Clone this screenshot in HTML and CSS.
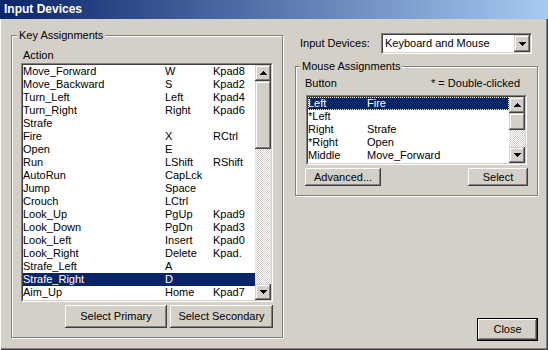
FILE: index.html
```html
<!DOCTYPE html>
<html lang="en">
<head>
  <meta charset="UTF-8">
  <title>Input Devices</title>
  <link rel="stylesheet" href="styles.css">
</head>
<body>
  <div class="dialog">
    <div class="titlebar">Input Devices</div>
    <div class="content">
      <fieldset class="group keys">
        <legend>Key Assignments</legend>
        <div class="col-label">Action</div>
        <div class="listbox key-list">
          <div class="listbox-in">
            <div class="rows">
              <div class="row"><span>Move_Forward</span><span>W</span><span>Kpad8</span></div>
              <div class="row"><span>Move_Backward</span><span>S</span><span>Kpad2</span></div>
              <div class="row"><span>Turn_Left</span><span>Left</span><span>Kpad4</span></div>
              <div class="row"><span>Turn_Right</span><span>Right</span><span>Kpad6</span></div>
              <div class="row"><span>Strafe</span><span></span><span></span></div>
              <div class="row"><span>Fire</span><span>X</span><span>RCtrl</span></div>
              <div class="row"><span>Open</span><span>E</span><span></span></div>
              <div class="row"><span>Run</span><span>LShift</span><span>RShift</span></div>
              <div class="row"><span>AutoRun</span><span>CapLck</span><span></span></div>
              <div class="row"><span>Jump</span><span>Space</span><span></span></div>
              <div class="row"><span>Crouch</span><span>LCtrl</span><span></span></div>
              <div class="row"><span>Look_Up</span><span>PgUp</span><span>Kpad9</span></div>
              <div class="row"><span>Look_Down</span><span>PgDn</span><span>Kpad3</span></div>
              <div class="row"><span>Look_Left</span><span>Insert</span><span>Kpad0</span></div>
              <div class="row"><span>Look_Right</span><span>Delete</span><span>Kpad.</span></div>
              <div class="row"><span>Strafe_Left</span><span>A</span><span></span></div>
              <div class="row selected"><span>Strafe_Right</span><span>D</span><span></span></div>
              <div class="row"><span>Aim_Up</span><span>Home</span><span>Kpad7</span></div>
            </div>
            <div class="scrollbar">
              <div class="sb-btn"><svg width="7" height="4" viewBox="0 0 7 4"><path d="M3 0h1v1h1v1h1v1h1v1H0V3h1V2h1V1h1z"/></svg></div>
              <div class="sb-thumb key-thumb"></div>
              <div class="sb-track"></div>
              <div class="sb-btn"><svg width="7" height="4" viewBox="0 0 7 4"><path d="M0 0h7v1H6v1H5v1H4v1H3V3H2V2H1V1H0z"/></svg></div>
            </div>
          </div>
        </div>
        <div class="btn-row">
          <button class="btn primary">Select Primary</button>
          <button class="btn secondary">Select Secondary</button>
        </div>
      </fieldset>

      <div class="side">
        <div class="device-row">
          <label class="device-label">Input Devices:</label>
          <div class="combo">
            <span class="combo-text">Keyboard and Mouse</span>
            <span class="sb-btn combo-btn"><svg width="7" height="4" viewBox="0 0 7 4"><path d="M0 0h7v1H6v1H5v1H4v1H3V3H2V2H1V1H0z"/></svg></span>
          </div>
        </div>

        <fieldset class="group mouse">
          <legend>Mouse Assignments</legend>
          <div class="col-label split"><span>Button</span><span>* = Double-clicked</span></div>
          <div class="listbox mouse-list">
            <div class="listbox-in">
              <div class="rows">
                <div class="row mrow selected focused"><span>Left</span><span>Fire</span></div>
                <div class="row mrow"><span>*Left</span><span></span></div>
                <div class="row mrow"><span>Right</span><span>Strafe</span></div>
                <div class="row mrow"><span>*Right</span><span>Open</span></div>
                <div class="row mrow"><span>Middle</span><span>Move_Forward</span></div>
              </div>
              <div class="scrollbar">
                <div class="sb-btn"><svg width="7" height="4" viewBox="0 0 7 4"><path d="M3 0h1v1h1v1h1v1h1v1H0V3h1V2h1V1h1z"/></svg></div>
                <div class="sb-thumb mouse-thumb"></div>
                <div class="sb-track"></div>
                <div class="sb-btn"><svg width="7" height="4" viewBox="0 0 7 4"><path d="M0 0h7v1H6v1H5v1H4v1H3V3H2V2H1V1H0z"/></svg></div>
              </div>
            </div>
          </div>
          <div class="btn-row spread">
            <button class="btn advanced">Advanced...</button>
            <button class="btn select">Select</button>
          </div>
        </fieldset>

        <button class="btn close">Close</button>
      </div>
    </div>
  </div>
</body>
</html>
```

FILE: styles.css
```css
:root {
  --face: #d4d0c8;
  --shadow: #808080;
  --dark: #404040;
  --light: #ffffff;
  --select: #0a246a;
}
* { box-sizing: border-box; }
html, body {
  margin: 0;
  background: var(--face);
}
body {
  font: 11px/13px "Liberation Sans", Arial, sans-serif;
  color: #000;
}
.dialog {
  width: 548px;
  height: 350px;
  display: flex;
  flex-direction: column;
  background: var(--face);
  box-shadow: inset 1px 1px var(--light), inset -1px -1px var(--dark), inset -2px -2px var(--shadow);
}
.titlebar {
  flex: none;
  height: 19px;
  padding: 3px 0 0 4px;
  font-weight: bold;
  font-size: 12px;
  line-height: 13px;
  color: #fff;
  background: linear-gradient(to right, #0a246a, #a6caf0);
}
.content {
  flex: 1;
  display: grid;
  grid-template-columns: 272px 1fr;
  column-gap: 12px;
  padding: 0 10px 0 11px;
}

/* group boxes */
.group {
  margin: 0;
  min-width: 0;
  border: 1px solid var(--shadow);
  box-shadow: inset 1px 1px var(--light), 1px 1px var(--light);
}
.group legend {
  padding: 0 2px;
  background: var(--face);
}
.keys {
  margin: 10px 0 12px;
  padding: 7px 9px 9px;
}
.keys legend { margin-left: -4px; }
.mouse {
  margin-top: 6px;
  padding: 4px 10px 9px;
}
.mouse legend { margin-left: -6px; }

.col-label {
  height: 13px;
  margin: 0 0 1px 2px;
}
.col-label.split {
  display: flex;
  justify-content: space-between;
  margin: 0 7px 5px -1px;
}

/* list boxes */
.listbox {
  border: 1px solid;
  border-color: var(--shadow) var(--light) var(--light) var(--shadow);
}
.listbox-in {
  height: 100%;
  display: flex;
  background: #fff;
  border: 1px solid;
  border-color: var(--dark) var(--face) var(--face) var(--dark);
}
.key-list { height: 239px; }
.mouse-list { height: 70px; }
.rows {
  flex: 1;
  overflow: hidden;
}
.row {
  display: grid;
  grid-template-columns: 142px 48px 1fr;
  height: 13px;
  white-space: nowrap;
}
.mrow { grid-template-columns: 59px 1fr; }
.row.selected {
  background: var(--select);
  color: #fff;
}
.row.focused {
  outline: 1px dotted #fff;
  outline-offset: -1px;
}

/* scroll bars */
.scrollbar {
  flex: none;
  width: 16px;
  display: flex;
  flex-direction: column;
}
.sb-btn {
  flex: none;
  width: 16px;
  height: 16px;
  display: flex;
  align-items: center;
  justify-content: center;
  background: var(--face);
  box-shadow: inset -1px -1px var(--dark), inset 1px 1px var(--face), inset -2px -2px var(--shadow), inset 2px 2px var(--light);
}
.sb-btn svg { display: block; }
.sb-thumb {
  flex: none;
  background: var(--face);
  box-shadow: inset -1px -1px var(--dark), inset 1px 1px var(--face), inset -2px -2px var(--shadow), inset 2px 2px var(--light);
}
.key-thumb { height: 68px; }
.mouse-thumb { height: 17px; }
.sb-track {
  flex: 1;
  background: repeating-conic-gradient(var(--light) 0 25%, var(--face) 0 50%) 0 0 / 2px 2px;
}

/* buttons */
.btn {
  margin: 0;
  padding: 0;
  border: none;
  font: inherit;
  color: #000;
  background: var(--face);
  box-shadow: inset -1px -1px var(--dark), inset 1px 1px var(--light), inset -2px -2px var(--shadow), inset 2px 2px var(--face);
}
.btn-row {
  display: flex;
  justify-content: flex-end;
  gap: 3px;
  margin-top: 3px;
}
.btn-row.spread {
  justify-content: space-between;
  margin: 3px -1px 0;
}
.primary { width: 102px; height: 23px; }
.secondary { width: 103px; height: 23px; }
.advanced { width: 76px; height: 18px; }
.select { width: 60px; height: 18px; }

/* right side */
.side {
  display: flex;
  flex-direction: column;
}
.device-row {
  display: flex;
  align-items: center;
  margin-top: 14px;
}
.device-label {
  width: 86px;
  padding-left: 5px;
}
.combo {
  width: 151px;
  height: 21px;
  display: flex;
  align-items: center;
  background: #fff;
  border: 1px solid;
  border-color: var(--shadow) var(--light) var(--light) var(--shadow);
  box-shadow: inset 1px 1px var(--dark), inset -1px -1px var(--face);
  padding: 1px 1px 1px 2px;
}
.combo-text {
  flex: 1;
  padding-left: 1px;
}
.combo-btn { height: 17px; }
.close {
  margin: auto 0 9px;
  align-self: flex-end;
  width: 61px;
  height: 23px;
  border: 1px solid #000;
}
```
